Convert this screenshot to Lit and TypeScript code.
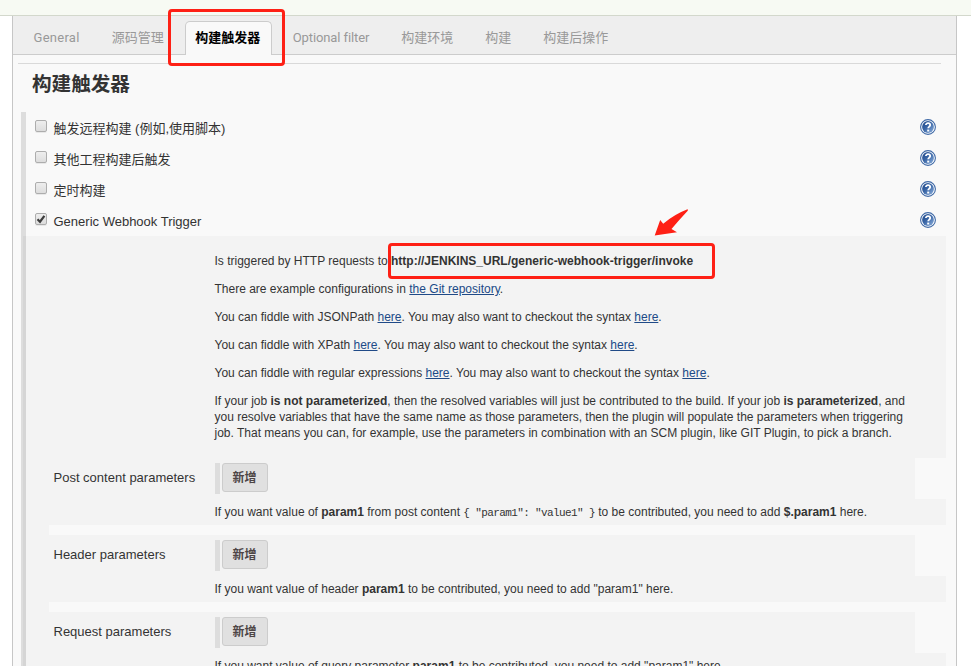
import { LitElement, html, css } from "lit";
import { customElement } from "lit/decorators.js";

@customElement("help-icon")
class HelpIcon extends LitElement {
  static styles = css`
    :host { display: block; width: 16px; height: 16px; }
    svg { display: block; }
  `;
  render() {
    return html`<svg width="16" height="16" viewBox="0 0 16 16">
      <defs>
        <linearGradient id="g" x1="0" y1="0" x2="1" y2="1">
          <stop offset="0" stop-color="#1c4587" />
          <stop offset="0.45" stop-color="#3a66a6" />
          <stop offset="1" stop-color="#8fb2de" />
        </linearGradient>
      </defs>
      <circle cx="8" cy="8" r="7.4" fill="#fff" stroke="#3f69a6" stroke-width="1.1" />
      <circle cx="8" cy="8" r="5.9" fill="url(#g)" />
      <path d="M5.9 6.1C5.9 3.4 10.2 3.5 10.2 6.1C10.2 7.6 8.2 7.7 8.2 9.3" fill="none" stroke="#fff" stroke-width="1.8" />
      <rect x="7.2" y="10.6" width="2" height="1.9" fill="#fff" />
    </svg>`;
  }
}

@customElement("trigger-option")
class TriggerOption extends LitElement {
  static properties = { label: {}, checked: { type: Boolean } };
  declare label: string;
  declare checked: boolean;
  static styles = css`
    :host { display: flex; height: 31px; box-sizing: border-box; padding: 0 10px 0 9px; align-items: flex-start; }
    .box { width: 10px; height: 10px; margin-top: 8px; border: 1px solid #adadad; border-radius: 2px;
      background: linear-gradient(#eee, #ddd); box-shadow: 0 1px 0 #0001; flex: none; }
    .box svg { display: block; margin: -1px; }
    .label { margin: 8px 0 0 6.5px; line-height: 17px; flex: 1; white-space: nowrap; }
    help-icon { margin-top: 7px; }
  `;
  render() {
    return html`<div class="box">${this.checked
        ? html`<svg width="12" height="12" viewBox="0 0 12 12"><path d="M2.5 6.2L5 8.7L9.4 2.8" fill="none" stroke="#3d3d3d" stroke-width="2.2" /></svg>`
        : ""}</div>
      <span class="label">${this.label}</span>
      <help-icon></help-icon>`;
  }
}

@customElement("param-block")
class ParamBlock extends LitElement {
  static properties = { label: {} };
  declare label: string;
  static styles = css`
    :host { display: block; }
    .top { display: flex; height: 41px; width: 889px; box-sizing: border-box; padding: 5px 0 0 27.5px; background: #f3f3f3; align-items: flex-start; }
    .label { width: 161.5px; line-height: 20px; margin-top: 5px; white-space: nowrap; }
    .bar { width: 5px; height: 31px; background: #ddd; }
    button { margin: 0 0 0 2px; width: 46px; height: 29px; padding: 0 1px 3px 0; border: 1px solid #ccc; border-radius: 3px;
      background: #e0e0e0; color: #4d4545; font: bold 12px "Liberation Sans", "Noto Sans CJK SC", sans-serif; }
    .desc { height: 26px; width: 920px; box-sizing: border-box; padding: 5px 0 0 188.5px; background: #f3f3f3;
      font-size: 12px; line-height: 16px; white-space: nowrap; }
  `;
  render() {
    return html`<div class="top"><span class="label">${this.label}</span><span class="bar"></span><button>新增</button></div>
      <div class="desc"><slot></slot></div>`;
  }
}

const tabs = ["General", "源码管理", "构建触发器", "Optional filter", "构建环境", "构建", "构建后操作"];

@customElement("app-root")
class AppRoot extends LitElement {
  static styles = css`
    :host { display: block; position: relative; width: 971px; height: 666px; overflow: hidden; background: #fff;
      color: #333; font: 13px "Liberation Sans", "Noto Sans CJK SC", sans-serif; }
    .strip { height: 15px; background: #f7faf3; border-bottom: 1px solid #d3d8cc; }
    .panel { margin-left: 12px; width: 943px; height: 650px; border: solid #c6c6c6; border-width: 0 1px; background: #f9f9f9; }
    .tabs { display: flex; height: 38px; padding-left: 4.5px; background: #eee; border-bottom: 1px solid #ccc;
      font: 13px Roboto, "Noto Sans CJK SC", sans-serif; color: #999; }
    .tab { padding: 0 16px; line-height: 43px; white-space: nowrap; }
    .tab:first-child { letter-spacing: 0.28px; }
    .tab:nth-child(4) { letter-spacing: -0.1px; }
    .tab.active { margin: 5px 5px -1px; width: 87px; height: 34px; line-height: 32px; padding: 0 0 0 9.5px; border: 1px solid #ccc; border-bottom: 0;
      border-radius: 5px 5px 0 0; background: #f9f9f9; color: #000; font-weight: bold; box-sizing: border-box; }
    .rule { height: 1px; margin: 8px 15px 0 5px; background: #d9d9d9; }
    h1 { margin: 6px 0 0 19px; font-size: 19.6px; line-height: 28px; font-weight: bold; }
    .form { margin: 14px 0 0 8px; width: 920px; border-left: 5px solid #ddd; }
    .detail { position: relative; }
    .inner { background: #f3f3f3; height: 222px; box-sizing: border-box; padding: 17px 0 0 188.5px; font-size: 12px; }
    .detail::before { content: ""; position: absolute; left: -3px; top: 0; bottom: 0; width: 3px; background: #d5d5d5; }
    p { margin: 0 0 12px; line-height: 16px; white-space: nowrap; }
    a { color: #204a87; text-decoration: underline; }
    .gap { height: 10px; width: 23px; background: #f3f3f3; }
    code { font: 11px "Liberation Mono", monospace; letter-spacing: -0.62px; }
    .mark { position: absolute; border: 3px solid #fe2015; border-radius: 4px; box-sizing: border-box; }
    .m1 { left: 168px; top: 9px; width: 117px; height: 57px; }
    .m2 { left: 388px; top: 243px; width: 327px; height: 36px; }
    .arrow { position: absolute; left: 650px; top: 205px; }
  `;
  render() {
    return html`
      <div class="strip"></div>
      <div class="panel">
        <div class="tabs">${tabs.map((t, i) => html`<div class="tab ${i === 2 ? "active" : ""}">${t}</div>`)}</div>
        <div class="rule"></div>
        <h1>构建触发器</h1>
        <div class="form">
          <trigger-option label="触发远程构建 (例如,使用脚本)"></trigger-option>
          <trigger-option label="其他工程构建后触发"></trigger-option>
          <trigger-option label="定时构建"></trigger-option>
          <trigger-option label="Generic Webhook Trigger" checked></trigger-option>
          <div class="detail">
            <div class="inner">
              <p>Is triggered by HTTP requests to <b>http://JENKINS_URL/generic-webhook-trigger/invoke</b></p>
              <p>There are example configurations in <a>the Git repository</a>.</p>
              <p>You can fiddle with JSONPath <a>here</a>. You may also want to checkout the syntax <a>here</a>.</p>
              <p>You can fiddle with XPath <a>here</a>. You may also want to checkout the syntax <a>here</a>.</p>
              <p>You can fiddle with regular expressions <a>here</a>. You may also want to checkout the syntax <a>here</a>.</p>
              <p>If your job <b>is not parameterized</b>, then the resolved variables will just be contributed to the build. If your job <b>is parameterized</b>, and<br />you resolve variables that have the same name as those parameters, then the plugin will populate the parameters when triggering<br />job. That means you can, for example, use the parameters in combination with an SCM plugin, like GIT Plugin, to pick a branch.</p>
            </div>
            <param-block label="Post content parameters">If you want value of <b>param1</b> from post content <code>{ "param1": "value1" }</code> to be contributed, you need to add <b>$.param1</b> here.</param-block>
            <div class="gap"></div>
            <param-block label="Header parameters">If you want value of header <b>param1</b> to be contributed, you need to add "param1" here.</param-block>
            <div class="gap"></div>
            <param-block label="Request parameters">If you want value of query parameter <b>param1</b> to be contributed, you need to add "param1" here.</param-block>
          </div>
        </div>
      </div>
      <div class="mark m1"></div>
      <div class="mark m2"></div>
      <svg class="arrow" width="40" height="34" viewBox="0 0 40 34"><path d="M4.7 30.5L10.2 15L13.2 18.8Q24 9.5 37.5 4.3Q38.5 4.8 37.5 6Q29 15 21.5 24L27 27.2Z" fill="#fe2015" /></svg>
    `;
  }
}
